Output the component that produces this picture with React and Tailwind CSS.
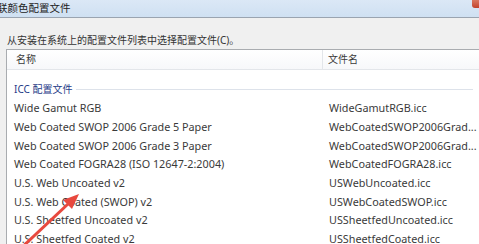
import React from 'react';

const rows = [
    ['Wide Gamut RGB', 'WideGamutRGB.icc'],
    ['Web Coated SWOP 2006 Grade 5 Paper', 'WebCoatedSWOP2006Grad...'],
    ['Web Coated SWOP 2006 Grade 3 Paper', 'WebCoatedSWOP2006Grad...'],
    ['Web Coated FOGRA28 (ISO 12647-2:2004)', 'WebCoatedFOGRA28.icc'],
    ['U.S. Web Uncoated v2', 'USWebUncoated.icc'],
    ['U.S. Web Coated (SWOP) v2', 'USWebCoatedSWOP.icc'],
    ['U.S. Sheetfed Uncoated v2', 'USSheetfedUncoated.icc'],
    ['U.S. Sheetfed Coated v2', 'USSheetfedCoated.icc'],
];

export default function App() {
    return (
        <div className="relative w-[479px] h-[244px] overflow-hidden bg-[#f0f0f0] text-[#3a3a3a] font-['Noto_Sans','Noto_Sans_CJK_SC',sans-serif]">
            {/* 标题栏 */}
            <div className="h-[18px] border-b border-[#9aa4b0] bg-gradient-to-b from-[#dbe8f6] to-[#cfe0f2] flex items-center">
                <span className="text-[10.5px] text-[#222] -ml-[3px] leading-none">联颜色配置文件</span>
            </div>

            <div className="pt-[15px]">
                <p className="pl-[7px] text-[10px] leading-[14px] text-[#333]">从安装在系统上的配置文件列表中选择配置文件(C)。</p>

                {/* 列表框 */}
                <div className="mt-[2px] ml-[6px] border-t border-l border-[#a9acb0] bg-white">
                    <div className="h-[20px] flex items-center border-b border-[#e3e6ea] bg-gradient-to-b from-white to-[#f7f8fa] text-[10px]">
                        <div className="w-[316px] pl-[9px] border-r border-[#e3e6ea] h-full flex items-center">名称</div>
                        <div className="pl-[5px]">文件名</div>
                    </div>

                    <div className="pt-[9px]">
                        <div className="h-[20px] flex items-center pl-[7px] pr-[6px]">
                            <span className="text-[10px] text-[#1f3c88] mr-[4px]">ICC 配置文件</span>
                            <div className="flex-1 h-px bg-[#dde2ea]"></div>
                        </div>
                        {rows.map(([name, file], i) => (
                            <div key={i} className="h-[18.7px] flex items-center text-[10.8px] whitespace-nowrap">
                                <div className="w-[322px] pl-[7px]">{name}</div>
                                <div>{file}</div>
                            </div>
                        ))}
                    </div>
                </div>
            </div>

            {/* 关闭按钮 */}
            <div className="absolute top-0 right-0 w-[7px] h-[8px] rounded-bl-[3px] bg-gradient-to-b from-[#d9765f] to-[#c2412a]"></div>

            {/* 红色箭头 */}
            <svg className="absolute left-0 top-0" width="479" height="244" viewBox="0 0 479 244">
                <line x1="18" y1="251" x2="68" y2="204" stroke="#e8493e" strokeWidth="3" />
                <polygon points="79,194 72,209 63,200" fill="#e8493e" />
            </svg>
        </div>
    );
}
